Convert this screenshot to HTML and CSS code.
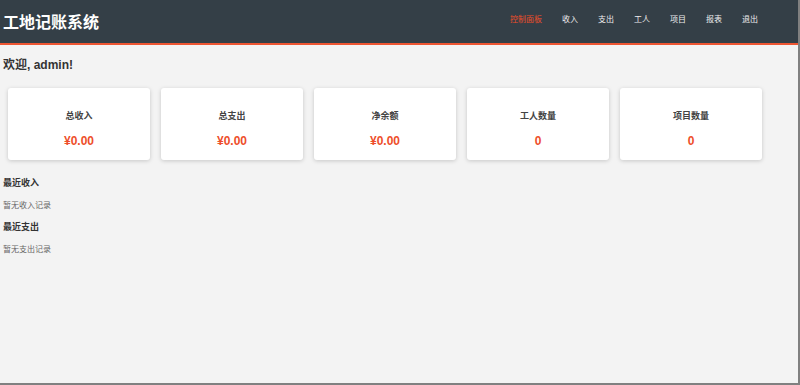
FILE: index.html
```html
<!DOCTYPE html>
<html lang="zh">
<head>
<meta charset="utf-8">
<title>工地记账系统</title>
<link rel="stylesheet" href="styles.css">
</head>
<body>
<div class="frame">
  <header class="topbar">
    <div class="brand">工地记账系统</div>
    <nav class="nav">
      <a class="nav-item active">控制面板</a>
      <a class="nav-item">收入</a>
      <a class="nav-item">支出</a>
      <a class="nav-item">工人</a>
      <a class="nav-item">项目</a>
      <a class="nav-item">报表</a>
      <a class="nav-item">退出</a>
    </nav>
  </header>
  <main class="content">
    <h2 class="welcome">欢迎, admin!</h2>
    <div class="cards">
      <div class="card"><div class="card-label">总收入</div><div class="card-value">¥0.00</div></div>
      <div class="card"><div class="card-label">总支出</div><div class="card-value">¥0.00</div></div>
      <div class="card"><div class="card-label">净余额</div><div class="card-value">¥0.00</div></div>
      <div class="card"><div class="card-label">工人数量</div><div class="card-value">0</div></div>
      <div class="card"><div class="card-label">项目数量</div><div class="card-value">0</div></div>
    </div>
    <h3 class="section-title first">最近收入</h3>
    <p class="empty">暂无收入记录</p>
    <h3 class="section-title">最近支出</h3>
    <p class="empty">暂无支出记录</p>
  </main>
</div>
</body>
</html>
```
FILE: styles.css
```css
* { box-sizing: border-box; }
html, body { margin: 0; padding: 0; }
body {
  font-family: "Liberation Sans", "Noto Sans CJK SC", sans-serif;
  color: #333;
  background: #f3f3f3;
}
.frame {
  width: 800px;
  height: 385px;
  border-right: 2px solid #808080;
  border-bottom: 2px solid #808080;
  background: #f3f3f3;
  overflow: hidden;
}
.topbar {
  height: 45px;
  background: #343f47;
  border-bottom: 2px solid #ee5532;
  display: flex;
  align-items: center;
  justify-content: space-between;
  padding: 0 40px 2px 3px;
}
.brand {
  color: #fff;
  font-size: 16px;
  font-weight: bold;
  line-height: 20px;
  font-family: "Noto Sans CJK SC", sans-serif;
}
.nav {
  display: flex;
  gap: 20px;
  padding-bottom: 4px;
}
.nav-item {
  color: #eeeeee;
  font-size: 8px;
  line-height: 10px;
  font-family: "Noto Sans CJK SC", sans-serif;
}
.nav-item.active { color: #ee4e2a; }
.content { padding: 0 3px; }
.welcome {
  margin: 13px 0 0;
  font-size: 12px;
  line-height: 14px;
  font-weight: bold;
  color: #333;
}
.cards {
  display: flex;
  gap: 11px;
  margin: 16px 0 0 5px;
}
.card {
  width: 142px;
  height: 72px;
  background: #fff;
  border-radius: 3px;
  box-shadow: 0 1px 4px rgba(0,0,0,0.18);
  display: flex;
  flex-direction: column;
  align-items: center;
  padding-top: 22px;
}
.card-label {
  font-size: 9px;
  line-height: 12px;
  font-weight: bold;
  color: #444;
}
.card-value {
  margin-top: 12px;
  font-size: 12px;
  line-height: 14px;
  font-weight: bold;
  color: #ee4e2a;
}
.section-title {
  margin: 10px 0 0;
  font-size: 9px;
  line-height: 12px;
  font-weight: bold;
  color: #333;
}
.section-title.first { margin-top: 17px; }
.empty {
  margin: 12px 0 0;
  font-size: 8px;
  line-height: 10px;
  color: #666;
}
```
